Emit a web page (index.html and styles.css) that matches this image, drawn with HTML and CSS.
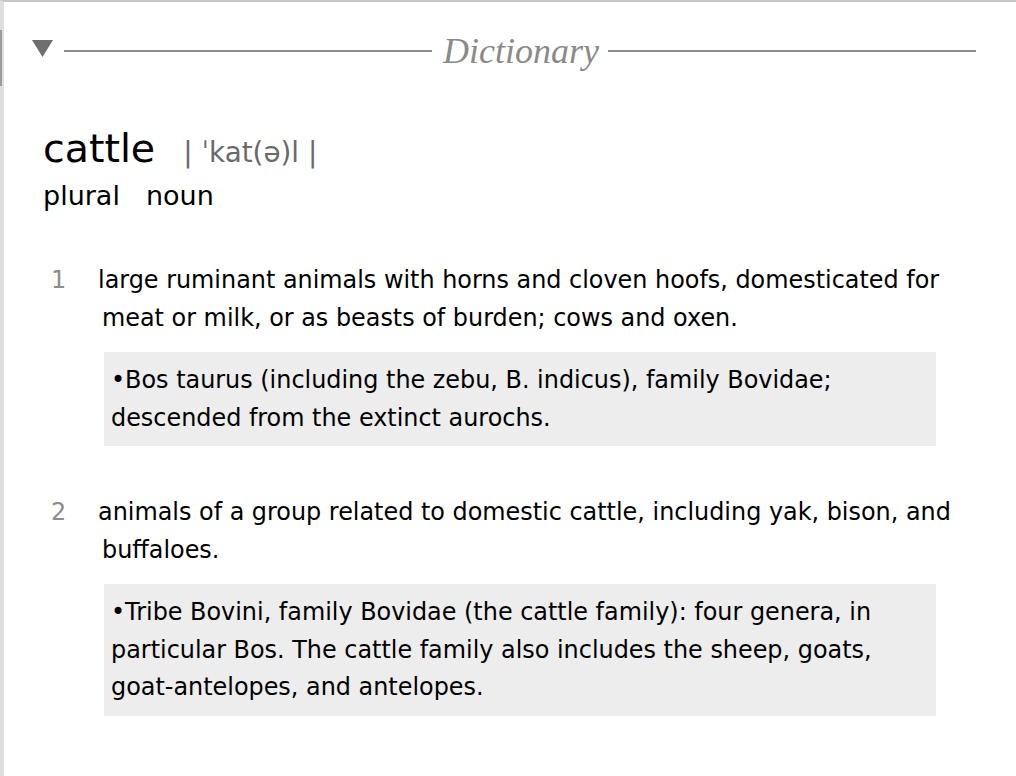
FILE: index.html
```html
<!DOCTYPE html>
<html lang="en">
<head>
<meta charset="utf-8">
<title>Dictionary — cattle</title>
<link rel="stylesheet" href="styles.css">
</head>
<body>
<div class="window">
  <div class="scroll-thumb"></div>
  <div class="section-header">
    <svg class="disclosure" width="21" height="17" viewBox="0 0 21 17"><polygon points="0,0 21,0 10.5,17" fill="#6f6f6f"/></svg>
    <div class="rule"></div>
    <div class="section-title">Dictionary</div>
    <div class="rule"></div>
  </div>
  <div class="entry">
    <div class="headword">cattle<span class="pron">| ˈkat(ə)l |</span></div>
    <div class="pos-line"><span>plural</span><span class="pos">noun</span></div>

    <div class="senses">
      <div class="sense">
        <div class="def"><span class="num">1</span>large ruminant animals with horns and cloven hoofs, domesticated for meat or milk, or as beasts of burden; cows and oxen.</div>
        <div class="note">•Bos taurus (including the zebu, B. indicus), family Bovidae; descended from the extinct aurochs.</div>
      </div>

      <div class="sense">
        <div class="def"><span class="num">2</span>animals of a group related to domestic cattle, including yak, bison, and buffaloes.</div>
        <div class="note">•Tribe Bovini, family Bovidae (the cattle family): four genera, in particular Bos. The cattle family also includes the sheep, goats, <span class="nowrap">goat-antelopes,</span> and antelopes.</div>
      </div>
    </div>
  </div>
</div>
</body>
</html>
```
FILE: styles.css
```css
html, body {
  margin: 0;
  padding: 0;
  background: #ffffff;
}

.window {
  position: relative;
  box-sizing: border-box;
  min-height: 100vh;
  border-top: 2px solid #c6c6c6;
  border-left: 4px solid #dedede;
  font-family: "DejaVu Sans", "Liberation Sans", sans-serif;
  color: #000;
}

.scroll-thumb {
  position: absolute;
  left: -4px;
  top: 28px;
  width: 2px;
  height: 56px;
  background: #9a9a9a;
}

.section-header {
  display: flex;
  align-items: center;
  height: 42px;
  margin-top: 28px;
  padding: 0 40px 0 28px;
}

.disclosure {
  flex: none;
  align-self: flex-start;
  margin-top: 10px;
  margin-right: 11px;
}

.rule {
  flex: 1;
  height: 2px;
  background: #8e8e8e;
}

.section-title {
  flex: none;
  margin: 0 9px 0 11px;
  font-family: "Liberation Serif", "Times New Roman", serif;
  font-style: italic;
  font-size: 36px;
  line-height: 42px;
  color: #8a8a8a;
}

.entry {
  padding: 0 40px 40px 39px;
}

.headword {
  margin-top: 52px;
  font-size: 39.5px;
  line-height: 48px;
  color: #000;
}

.pron {
  margin-left: 28px;
  font-size: 27.8px;
  line-height: 1;
  color: #6a6a6a;
}

.pos-line {
  margin-top: 8px;
  font-size: 27px;
  line-height: 32px;
  color: #000;
}

.pos {
  margin-left: 26px;
}

.senses {
  display: flex;
  flex-direction: column;
  gap: 48px;
  margin-top: 50px;
  font-size: 23.9px;
  line-height: 37.5px;
}

.def {
  padding-left: 59px;
  text-indent: -51px;
}

.num {
  display: inline-block;
  width: 47px;
  text-indent: 0;
  color: #8c8c8c;
}

.note {
  margin: 15px 40px 0 61px;
  padding: 10px 7px 9px 7px;
  background: #ededed;
}

.nowrap {
  white-space: nowrap;
}
```
